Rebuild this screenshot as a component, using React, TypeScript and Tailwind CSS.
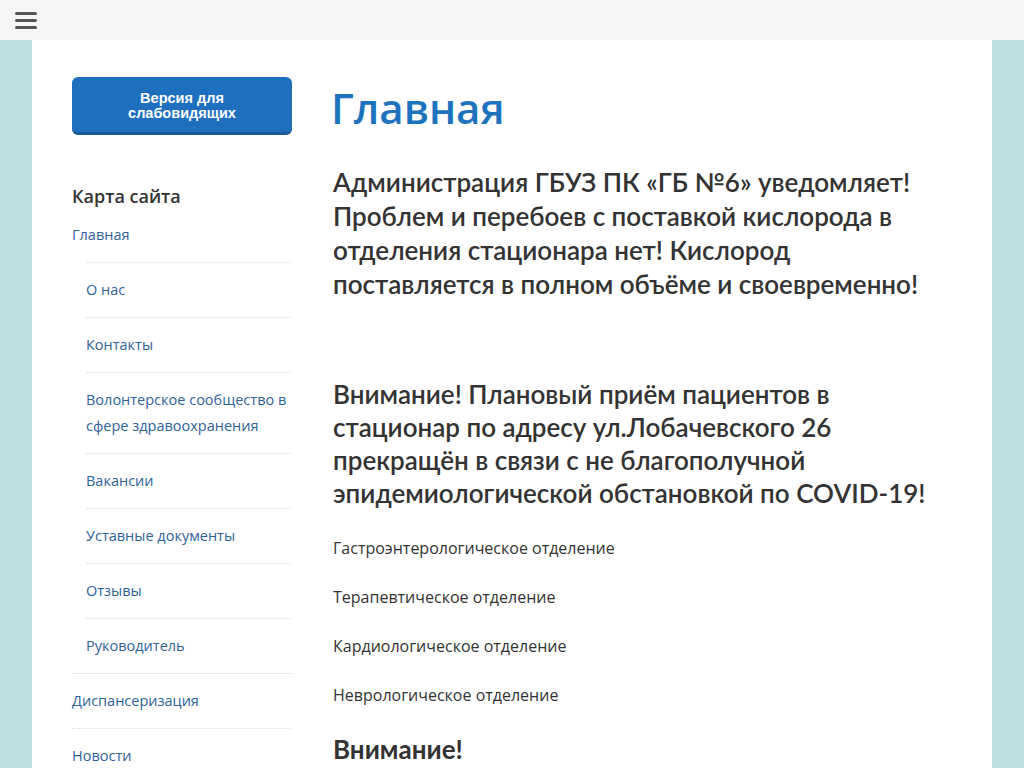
import React from "react";

const sub = ["О нас", "Контакты", "Волонтерское сообщество в сфере здравоохранения", "Вакансии", "Уставные документы", "Отзывы", "Руководитель"];

export default function App() {
  return (
    <div className="min-h-screen bg-[#bde0e3]" style={{ fontFamily: '"Open Sans", sans-serif' }}>
      <div className="h-10 bg-[#f5f5f6] flex items-center px-[15px]">
        <div className="flex flex-col gap-[4px] w-[22px]">
          <span className="block h-[3px] bg-[#555] rounded-sm" />
          <span className="block h-[3px] bg-[#555] rounded-sm" />
          <span className="block h-[3px] bg-[#555] rounded-sm" />
        </div>
      </div>
      <div className="mx-[32px] bg-white flex px-10 pt-[37px] min-h-[728px]">
        <aside className="w-[220px] shrink-0">
          <div className="h-[58px] rounded-[6px] bg-[#1f6fbf] border-b-[3px] border-[#1a5a9c] flex items-center justify-center pt-[3px] text-white text-[14.5px] leading-[15px] font-bold text-center" style={{ fontFamily: '"Liberation Sans", Arial, sans-serif' }}>
            Версия для<br />слабовидящих
          </div>
          <h3 className="mt-[49px] text-[18px] font-semibold text-[#333] leading-[24px]">Карта сайта</h3>
          <ul className="text-[14.5px] text-[#2f6299]">
            <li className="leading-[26px] py-[14px]">Главная</li>
            <li className="ml-[14px]">
              <ul>
                {sub.map((s) => (
                  <li key={s} className="border-t border-dotted border-[#ddd] py-[14px] leading-[26px]">{s}</li>
                ))}
              </ul>
            </li>
            <li className="border-t border-[#e8e8e8] py-[14px] leading-[26px]">Диспансеризация</li>
            <li className="border-t border-dotted border-[#ddd] py-[14px] leading-[26px]">Новости</li>
          </ul>
        </aside>
        <main className="ml-[41px] flex-1 text-[#333]">
          <h1 className="text-[42px] font-semibold text-[#1e73be] leading-[60px] mt-[1px] -ml-[2px]">Главная</h1>
          <div className="mt-[27px] text-[26px] font-semibold leading-[34px]" style={{ fontFamily: 'Lato, sans-serif' }}>
            <p>Администрация ГБУЗ ПК «ГБ №6» уведомляет!</p>
            <p>Проблем и перебоев с поставкой кислорода в отделения стационара нет! Кислород поставляется в полном объёме и своевременно!</p>
          </div>
          <div className="mt-[77px] text-[26px] font-semibold leading-[33px]" style={{ fontFamily: 'Lato, sans-serif' }}>
            Внимание! Плановый приём пациентов в стационар по адресу ул.Лобачевского 26 прекращён в связи с не благополучной эпидемиологической обстановкой по COVID-19!
          </div>
          <div className="mt-[26px] text-[16px] leading-[24px]">
            <p className="mb-[25px]">Гастроэнтерологическое отделение</p>
            <p className="mb-[25px]">Терапевтическое отделение</p>
            <p className="mb-[25px]">Кардиологическое отделение</p>
            <p className="mb-[25px]">Неврологическое отделение</p>
          </div>
          <h2 className="mt-[14px] text-[26px] font-bold leading-[34px]" style={{ fontFamily: 'Lato, sans-serif' }}>Внимание!</h2>
        </main>
      </div>
    </div>
  );
}
